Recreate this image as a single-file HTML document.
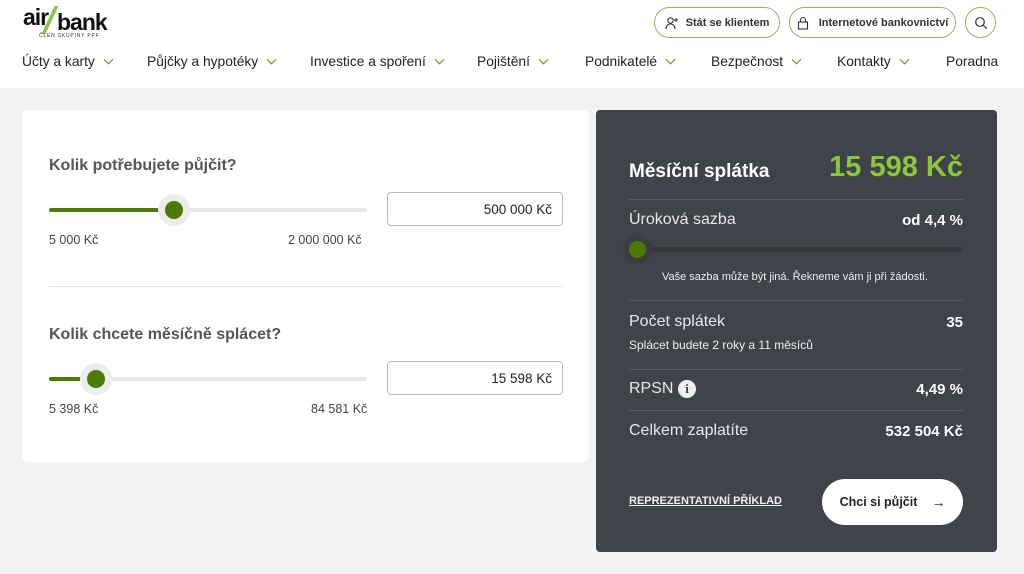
<!DOCTYPE html>
<html><head><meta charset="utf-8"><style>
*{margin:0;padding:0;box-sizing:border-box}
body{width:1024px;height:574px;overflow:hidden;background:#f2f2f2;font-family:"Liberation Sans",sans-serif;color:#333;position:relative}
.a{position:absolute}
header{position:absolute;left:0;top:0;width:1024px;height:88px;background:#fff}
.nav{font-size:13.8px;color:#222;top:54px}
.chev{display:inline-block;width:7px;height:7px;border-right:1.6px solid #5a8a1f;border-bottom:1.6px solid #5a8a1f;transform:rotate(45deg);margin-left:10px;position:relative;top:-3px}
.btn{border:1.5px solid #8cb865;border-radius:16px;height:31px;top:7px;font-size:11px;font-weight:bold;color:#333;display:flex;align-items:center;justify-content:center;background:#fff}
.card{left:22px;top:110px;width:567px;height:352px;background:#fff;border-radius:6px}
.dark{left:596px;top:110px;width:401px;height:442px;background:#404349;border-radius:4px;color:#fff}
.q{font-size:16px;font-weight:bold;color:#555}
.track{height:4px;background:#e6e6e6;border-radius:2px}
.fill{height:4px;background:#4a7a00;border-radius:2px}
.knob{width:18px;height:18px;border-radius:50%;background:#4a7a00;box-shadow:0 0 0 7px #ececec}
.small{font-size:12.5px;color:#444}
.inp{border:1px solid #bbb;border-radius:4px;height:34px;width:176px;font-size:13.5px;text-align:right;padding:9px 10px;color:#222}
.line{height:1px;background:#5a5d63;left:33px;width:334px}
.lbl{font-size:16px;color:#e8e8e8}
.val{font-size:15px;font-weight:bold;right:34px;color:#fff}
</style></head><body>
<header>
<div class="a" style="left:23px;top:4px;font-size:23px;font-weight:bold;color:#111;letter-spacing:-1px">air</div>
<div class="a" style="left:48px;top:6px;width:4px;height:28px;background:#8bc53f;transform:skewX(-25deg)"></div>
<div class="a" style="left:57px;top:9px;font-size:23px;font-weight:bold;color:#111;letter-spacing:-1px">bank</div>
<div class="a" style="left:39px;top:33px;font-size:5px;color:#333;letter-spacing:0.8px">ČLEN SKUPINY PPF</div>
<div class="a btn" style="left:654px;width:126px"><svg width="14" height="14" viewBox="0 0 14 14" style="margin-right:7px"><circle cx="5.5" cy="4.5" r="2.7" fill="none" stroke="#333" stroke-width="1.1"/><path d="M1 13c0-3 2-5 4.5-5s4.5 2 4.5 5" fill="none" stroke="#333" stroke-width="1.1"/><path d="M11 2v4M9 4h4" stroke="#333" stroke-width="1.1"/></svg>Stát se klientem</div>
<div class="a btn" style="left:789px;width:167px"><svg width="12" height="14" viewBox="0 0 12 14" style="margin-right:10px"><rect x="1.5" y="6" width="9" height="7" fill="none" stroke="#333" stroke-width="1.1"/><path d="M3.5 6V4a2.5 2.5 0 0 1 5 0v2" fill="none" stroke="#333" stroke-width="1.1"/></svg>Internetové bankovnictví</div>
<div class="a btn" style="left:965px;width:31px;padding:0"><svg width="14" height="14" viewBox="0 0 14 14"><circle cx="6" cy="6" r="4.3" fill="none" stroke="#333" stroke-width="1.2"/><path d="M9.2 9.2l3.5 3.5" stroke="#333" stroke-width="1.2"/></svg></div>
<div class="a nav" style="left:22px">Účty a karty<span class="chev"></span></div>
<div class="a nav" style="left:147px">Půjčky a hypotéky<span class="chev"></span></div>
<div class="a nav" style="left:310px">Investice a spoření<span class="chev"></span></div>
<div class="a nav" style="left:477px">Pojištění<span class="chev"></span></div>
<div class="a nav" style="left:585px">Podnikatelé<span class="chev"></span></div>
<div class="a nav" style="left:711px">Bezpečnost<span class="chev"></span></div>
<div class="a nav" style="left:837px">Kontakty<span class="chev"></span></div>
<div class="a nav" style="left:946px">Poradna</div>
</header>
<div class="a card"></div>
<div class="a q" style="left:49px;top:157px">Kolik potřebujete půjčit?</div>
<div class="a track" style="left:49px;top:208px;width:318px"></div>
<div class="a fill" style="left:49px;top:208px;width:125px"></div>
<div class="a knob" style="left:165px;top:201px"></div>
<div class="a small" style="left:49px;top:233px">5 000 Kč</div>
<div class="a small" style="left:288px;top:233px">2 000 000 Kč</div>
<div class="a inp" style="left:387px;top:192px">500 000 Kč</div>
<div class="a" style="left:49px;top:286px;width:514px;height:1px;background:#e3e3e3"></div>
<div class="a q" style="left:49px;top:326px">Kolik chcete měsíčně splácet?</div>
<div class="a track" style="left:49px;top:377px;width:318px"></div>
<div class="a fill" style="left:49px;top:377px;width:47px"></div>
<div class="a knob" style="left:87px;top:370px"></div>
<div class="a small" style="left:49px;top:402px">5 398 Kč</div>
<div class="a small" style="left:311px;top:402px">84 581 Kč</div>
<div class="a inp" style="left:387px;top:361px">15 598 Kč</div>

<div class="a dark"></div>
<div class="a" style="left:629px;top:161px;font-size:19px;font-weight:bold;color:#fff">Měsíční splátka</div>
<div class="a" style="right:61px;top:151px;font-size:29px;font-weight:bold;color:#8cc63f">15 598 Kč</div>
<div class="a line" style="left:629px;top:199px"></div>
<div class="a lbl" style="left:629px;top:211px">Úroková sazba</div>
<div class="a val" style="right:61px;top:212px">od 4,4 %</div>
<div class="a" style="left:629px;top:247px;width:334px;height:5px;border-radius:3px;background:#33363b"></div>
<div class="a" style="left:629px;top:241px;width:17px;height:17px;border-radius:50%;background:#4a7a00;box-shadow:0 0 0 6px #3a3d42"></div>
<div class="a" style="left:662px;top:271px;font-size:11px;color:#eee">Vaše sazba může být jiná. Řekneme vám ji při žádosti.</div>
<div class="a line" style="left:629px;top:300px"></div>
<div class="a lbl" style="left:629px;top:313px">Počet splátek</div>
<div class="a val" style="right:61px;top:314px">35</div>
<div class="a" style="left:629px;top:338px;font-size:12px;color:#eee">Splácet budete 2 roky a 11 měsíců</div>
<div class="a line" style="left:629px;top:369px"></div>
<div class="a lbl" style="left:629px;top:380px">RPSN</div>
<div class="a" style="left:678px;top:380px;width:18px;height:18px;border-radius:50%;background:#eee;color:#404349;font-size:13px;font-weight:bold;text-align:center;line-height:18px;font-family:'Liberation Serif',serif">i</div>
<div class="a val" style="right:61px;top:381px">4,49 %</div>
<div class="a line" style="left:629px;top:410px"></div>
<div class="a lbl" style="left:629px;top:422px">Celkem zaplatíte</div>
<div class="a val" style="right:61px;top:423px">532 504 Kč</div>
<div class="a" style="left:629px;top:495px;font-size:11px;font-weight:bold;color:#eee;text-decoration:underline">REPREZENTATIVNÍ PŘÍKLAD</div>
<div class="a" style="left:822px;top:479px;width:141px;height:46px;border-radius:23px;background:#fff;color:#222;font-size:12.5px;font-weight:bold;display:flex;align-items:center;justify-content:center">Chci si půjčit<span style="margin-left:14px;font-weight:normal;font-size:14px">→</span></div>
</body></html>
